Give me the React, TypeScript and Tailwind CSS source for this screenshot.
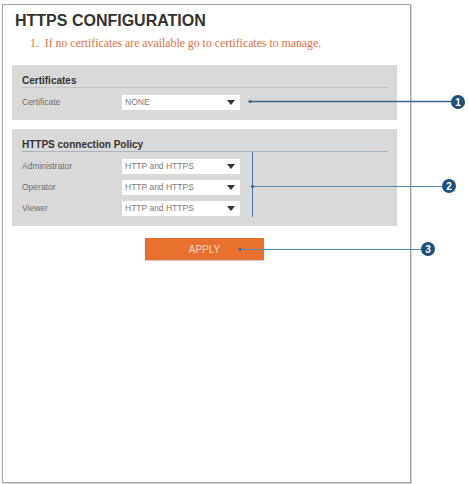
import React from 'react';

const SANS = "font-['Liberation_Sans',Arial,sans-serif]";

const ROWS = [
  { label: 'Administrator', value: 'HTTP and HTTPS' },
  { label: 'Operator', value: 'HTTP and HTTPS' },
  { label: 'Viewer', value: 'HTTP and HTTPS' },
];

// 下拉框（仅显示）
function FakeSelect({ value }: { value: string }) {
  return (
    <div className="flex items-center justify-between w-[118px] h-[15px] bg-white pl-[3px] pr-[5px]">
      <span className="text-[8.5px] leading-none text-[#7a7a7a]">{value}</span>
      <svg width="8" height="5" viewBox="0 0 8 5">
        <polygon points="0,0 8,0 4,5" fill="#333" />
      </svg>
    </div>
  );
}

function Row({ label, value }: { label: string; value: string }) {
  return (
    <div className="flex items-center">
      <span className="w-[100px] text-[8.5px] leading-none text-[#707070]">{label}</span>
      <FakeSelect value={value} />
    </div>
  );
}

// 标注编号
function Badge({ cx, cy, n }: { cx: number; cy: number; n: number }) {
  return (
    <g>
      <circle cx={cx} cy={cy} r={7} fill="#1f4f7c" />
      <text
        x={cx}
        y={cy + 3.5}
        textAnchor="middle"
        fontSize="10"
        fontWeight="bold"
        fill="#fff"
        fontFamily="'Liberation Sans', Arial, sans-serif"
      >
        {n}
      </text>
    </g>
  );
}

export default function App() {
  return (
    <div className={`relative w-[468px] h-[484px] bg-white overflow-hidden ${SANS}`}>
      <div className="ml-[2px] mt-[4px] w-[409px] h-[479px] border border-[#a3a3a3] shadow-[1px_1px_0_#d4d4d4] pt-[7px] pl-[9px] pr-[13px]">
        <h1 className="pl-[3px] text-[16px] leading-[18px] font-bold text-[#333]">HTTPS CONFIGURATION</h1>
        <p className="mt-[6px] pl-[18px] text-[11.8px] leading-[14px] text-[#e2703f] font-['Liberation_Serif','Times_New_Roman',serif]">
          1.&nbsp; If no certificates are available go to certificates to manage.
        </p>

        {/* Certificates */}
        <div className="mt-[15px] bg-[#d9d9d9] pt-[10px] pb-[10px] pl-[10px] pr-[9px]">
          <div className="text-[10px] leading-[12px] font-bold text-[#333] border-b border-[#c2c4c6]">Certificates</div>
          <div className="mt-[7px]">
            <Row label="Certificate" value="NONE" />
          </div>
        </div>

        {/* HTTPS connection Policy */}
        <div className="mt-[9px] bg-[#d9d9d9] pt-[10px] pb-[10px] pl-[10px] pr-[9px]">
          <div className="text-[10px] leading-[12px] font-bold text-[#333] border-b border-[#aab2ba]">HTTPS connection Policy</div>
          <div className="mt-[7px] flex flex-col gap-[6px]">
            {ROWS.map(r => (
              <Row key={r.label} label={r.label} value={r.value} />
            ))}
          </div>
        </div>

        <div className="mt-[12px] flex justify-center">
          <button className="w-[119px] h-[22px] bg-[#e8712f] text-[10px] text-[#f8d6c0] shadow-[0_1px_1px_rgba(0,0,0,0.2)]">
            APPLY
          </button>
        </div>
      </div>

      {/* 标注线 */}
      <svg className="absolute left-0 top-0" width="468" height="484" viewBox="0 0 468 484">
        <line x1="250" y1="101.5" x2="452" y2="101.5" stroke="#3e6688" strokeWidth="1.6" />
        <circle cx="250" cy="101.5" r="1.6" fill="#3e6688" />
        <Badge cx={458} cy={102} n={1} />

        <line x1="252.5" y1="152" x2="252.5" y2="217" stroke="#4a78a0" strokeWidth="1" />
        <line x1="252" y1="186.5" x2="443" y2="186.5" stroke="#5a88ae" strokeWidth="1" />
        <circle cx="252.5" cy="186.5" r="1.6" fill="#3e6688" />
        <Badge cx={449} cy={186} n={2} />

        <line x1="240" y1="249.5" x2="422" y2="249.5" stroke="#5a88ae" strokeWidth="1" />
        <circle cx="240" cy="249.5" r="1.6" fill="#3e6688" />
        <Badge cx={428} cy={249} n={3} />
      </svg>
    </div>
  );
}
